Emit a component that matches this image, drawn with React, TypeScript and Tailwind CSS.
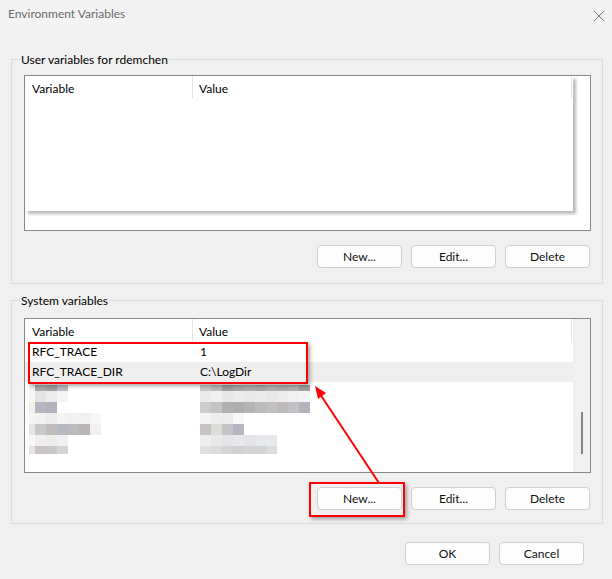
import React from "react";

const leftCols = [6, 11, 11, 11, 11, 11, 11];
const rightCols = [11, 11, 11, 11, 11, 11, 11, 11, 11, 11];
const rowHeights = [6, 11, 11, 11, 11, 11, 8];

const leftColors: (string | null)[][] = [
  ["#f4f4ee", "#a9a9a9", "#a2a2a2", "#bcbcc4", null, null, null],
  ["#f8f8f0", "#e4e4e4", "#ececec", "#f4f4f8", null, null, null],
  ["#f0f0e4", "#b8b4c0", "#b4b0bc", null, null, null, null],
  ["#f4f4f4", "#f2f2f2", "#ececec", "#f4f4f4", "#f4f2f0", "#f0f0ee", "#f6f6f6"],
  ["#e8e4e8", "#c8c8c8", "#c0bcbc", "#b8b8c0", "#bcbcbc", "#b8b4b8", "#f0f0f0"],
  ["#f8f6f6", "#f0eeee", "#ececec", "#f0f0f4", null, null, null],
  ["#e8e4e4", "#c8c4c8", "#c8c8c8", "#d4d4d8", null, null, null],
];

const rightColors: (string | null)[][] = [
  ["#c8c8c8", "#bababa", "#a0a0a0", "#a8a8a8", "#acacac", "#a8a8a8", "#b0b0b4", "#acacac", "#b0b0b0", "#a0a0a0"],
  ["#ebebeb", "#f0f0f0", "#e8e8e8", "#ececec", "#e8e8e8", "#ebebeb", "#e8e8e8", "#ececec", "#f0f0f0", "#f4f4f4"],
  ["#cccccc", "#c4c4c4", "#b0b0b0", "#b0acb0", "#b4b4b4", "#bcbcbc", "#c0c0c4", "#bcb8bc", "#c4c0c4", "#b4b4bc"],
  ["#f4f4f4", "#eeeeee", "#ececec", "#f8f8f8", null, null, null, null, null, null],
  ["#c8c4c4", "#dcdcd8", "#c4c4c8", "#b8b4c0", null, null, null, null, null, null],
  ["#eeeeee", "#e8e8e8", "#e4e4e8", "#e8e8ec", "#e4e4e8", "#e8e8ec", "#e4eaee", null, null, null],
  ["#e0e0e0", "#dcdcdc", "#d4d4d4", "#d0d0d0", "#d4d4d4", "#d0d4d4", "#dcdcdc", null, null, null],
];

function Mosaic({ cols, colors }: { cols: number[]; colors: (string | null)[][] }) {
  return (
    <div className="flex flex-col">
      {rowHeights.map((h, r) => (
        <div key={r} className="flex" style={{ height: h }}>
          {cols.map((w, c) => (
            <div key={c} style={{ width: w, height: h, background: colors[r][c] ?? "transparent" }} />
          ))}
        </div>
      ))}
    </div>
  );
}

function Btn({ label }: { label: string }) {
  return (
    <div className="w-[85px] h-[23px] rounded-[4px] border border-[#d0d0d0] bg-[#fdfdfd] flex items-center justify-center text-[12px] text-[#111111]">
      {label}
    </div>
  );
}

function Header() {
  return (
    <div className="flex h-[23px] text-[12px] text-black">
      <div className="w-[168px] h-[22px] flex items-center pt-[4px] pl-[7px] border-r border-[#e5e5e5]">Variable</div>
      <div className="w-[379px] h-[22px] flex items-center pt-[4px] pl-[6px] border-r border-[#e5e5e5]">Value</div>
    </div>
  );
}

export default function App() {
  return (
    <div
      className="relative w-[612px] h-[579px] bg-[#f0f0f0] overflow-hidden flex flex-col"
      style={{ fontFamily: "'Segoe UI', Lato, 'Noto Sans', sans-serif" }}
    >
      {/* title bar */}
      <div className="h-[32px] bg-[#f3f3f3] flex justify-between pl-[8px] pr-[6px]">
        <span className="text-[12px] leading-[16px] pt-[6px] text-[#6b6b6b]">Environment Variables</span>
        <svg width="12" height="12" viewBox="0 0 12 12" className="mr-[1px] self-center">
          <path d="M1 1L11 11M11 1L1 11" stroke="#7a7a7a" strokeWidth="1" />
        </svg>
      </div>

      <div className="flex flex-col pl-[11px] pr-[9px] pt-[27px]">
        {/* User group */}
        <div className="relative border border-[#dcdcdc] h-[225px] flex flex-col pl-[12px] pr-[11px] pt-[15px]">
          <span className="absolute -top-[8px] left-[8px] px-[1px] bg-[#f0f0f0] text-[12px] text-black leading-[16px]">
            User variables for rdemchen
          </span>
          <div className="h-[156px] border border-[#828790] bg-white">
            <div className="w-[548px] h-[135px] bg-white shadow-[3px_3px_3px_rgba(0,0,0,0.28)]">
              <Header />
            </div>
          </div>
          <div className="flex justify-end gap-[9px] mt-[14px] pr-[1px]">
            <Btn label="New..." />
            <Btn label="Edit..." />
            <Btn label="Delete" />
          </div>
        </div>

        {/* System group */}
        <div className="relative border border-[#dcdcdc] h-[224px] mt-[16px] flex flex-col pl-[12px] pr-[11px] pt-[17px]">
          <span className="absolute -top-[8px] left-[8px] px-[1px] bg-[#f0f0f0] text-[12px] text-black leading-[16px]">
            System variables
          </span>
          <div className="h-[155px] border border-[#828790] bg-white flex">
            <div className="w-[548px] flex flex-col">
              <Header />
              <div className="h-[20px] flex items-center text-[12px] text-black">
                <span className="w-[168px] pl-[7px]">RFC_TRACE</span>
                <span className="pl-[7px]">1</span>
              </div>
              <div className="h-[20px] flex items-center text-[12px] text-black bg-[#efefef]">
                <span className="w-[168px] pl-[7px]">RFC_TRACE_DIR</span>
                <span className="pl-[7px]">C:\LogDir</span>
              </div>
              <div className="flex mt-[3px]">
                <div className="ml-[4px]">
                  <Mosaic cols={leftCols} colors={leftColors} />
                </div>
                <div className="ml-[99px]">
                  <Mosaic cols={rightCols} colors={rightColors} />
                </div>
              </div>
            </div>
            <div className="flex-1 bg-[#f0f0f0] flex justify-center pt-[93px]">
              <div className="w-[2px] h-[42px] bg-[#858585]" />
            </div>
          </div>
          <div className="flex justify-end gap-[9px] mt-[14px] pr-[1px]">
            <Btn label="New..." />
            <Btn label="Edit..." />
            <Btn label="Delete" />
          </div>
        </div>

        <div className="flex justify-end gap-[9px] mt-[18px] pr-[19px]">
          <Btn label="OK" />
          <Btn label="Cancel" />
        </div>
      </div>

      {/* annotations */}
      <div className="absolute left-[28px] top-[342px] w-[280px] h-[42px] border-2 border-[#ff0000] shadow-[2px_2px_4px_rgba(0,0,0,0.35)]" />
      <div className="absolute left-[309px] top-[482px] w-[96px] h-[35px] border-2 border-[#ff0000] shadow-[2px_2px_4px_rgba(0,0,0,0.35)]" />
      <svg className="absolute left-0 top-0" width="612" height="579" viewBox="0 0 612 579">
        <line x1="379" y1="483" x2="320" y2="394" stroke="#ff0000" strokeWidth="2" />
        <polygon points="315,386 326,393 318,399" fill="#ff0000" />
      </svg>
    </div>
  );
}
